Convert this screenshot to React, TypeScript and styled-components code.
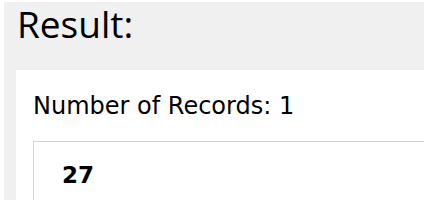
import * as React from "react";
import styled, { createGlobalStyle } from "styled-components";

const GlobalStyle = createGlobalStyle`
    html, body {
        margin: 0;
        padding: 0;
        background: #fff;
        overflow: hidden;
    }
`;

const Frame = styled.div`
    margin: 2px 0 0 4px;
    height: 198px;
    background: #f0f0f0;
    overflow: hidden;
    padding: 0 0 0 12px;
    box-sizing: border-box;
`;

const Title = styled.h1`
    margin: 0 0 24px 1px;
    font-family: "Open Sans", "Noto Sans", sans-serif;
    font-weight: 400;
    font-size: 37px;
    line-height: 44px;
    color: #000;
`;

const Panel = styled.div`
    background: #fff;
    padding: 22px 0 0 17px;
    height: 200px;
    font-family: "DejaVu Sans", Verdana, sans-serif;
    color: #000;
`;

const Count = styled.div`
    font-size: 24px;
    line-height: 28px;
    margin-bottom: 21px;
`;

const ValueBox = styled.div`
    border: 1px solid #d2d2d2;
    border-right: none;
    padding: 19px 0 0 28px;
    height: 120px;
`;

const Value = styled.span<{ bold?: boolean }>`
    font-size: 23px;
    line-height: 28px;
    font-weight: ${props => (props.bold ? 700 : 400)};
`;

export default function App() {
    const records = ["27"];
    return (
        <>
            <GlobalStyle />
            <Frame>
                <Title>Result:</Title>
                <Panel>
                    <Count>Number of Records: {records.length}</Count>
                    <ValueBox>
                        {records.map(r => (
                            <Value key={r} bold>{r}</Value>
                        ))}
                    </ValueBox>
                </Panel>
            </Frame>
        </>
    );
}
